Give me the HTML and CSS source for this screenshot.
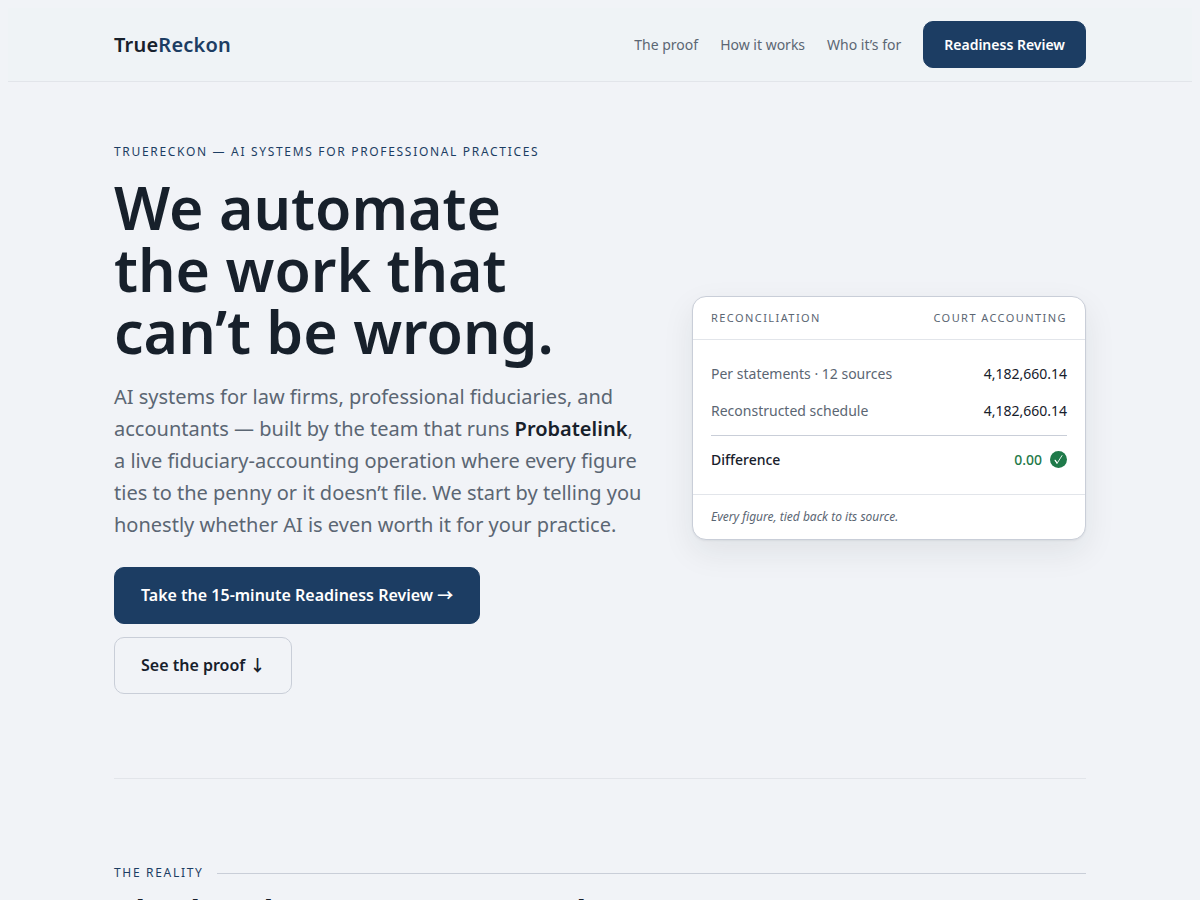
FILE: index.html
```html
<!DOCTYPE html>
<html lang="en">
<head>
<meta charset="utf-8">
<meta name="viewport" content="width=device-width, initial-scale=1">
<title>TrueReckon</title>
<link rel="stylesheet" href="styles.css">
</head>
<body>
<header class="site-header">
  <div class="wrap bar">
    <a class="brand" href="#top">True<span>Reckon</span></a>
    <nav class="nav">
      <a class="nav-link" href="#proof">The proof</a>
      <a class="nav-link" href="#how">How it works</a>
      <a class="nav-link" href="#who">Who it’s for</a>
      <a class="btn btn-primary btn-small" href="#review">Readiness Review</a>
    </nav>
  </div>
</header>
<main class="wrap" id="top">
  <section class="hero">
    <div>
      <p class="eyebrow">TrueReckon — AI systems for professional practices</p>
      <h1 class="title">We automate<br>the work that<br>can’t be wrong.</h1>
      <p class="lede">AI systems for law firms, professional fiduciaries, and accountants — built by the team that runs <strong>Probatelink</strong>, a live fiduciary-accounting operation where every figure ties to the penny or it doesn’t file. We start by telling you honestly whether AI is even worth it for your practice.</p>
      <div class="actions">
        <a class="btn btn-primary" href="#review">Take the 15-minute Readiness Review <span class="arrow">→</span></a>
        <a class="btn btn-ghost" href="#proof">See the proof <span class="arrow">↓</span></a>
      </div>
    </div>
    <aside class="card" id="proof">
      <div class="card-head"><span>Reconciliation</span><span>Court accounting</span></div>
      <dl class="ledger">
        <div class="row"><dt>Per statements · 12 sources</dt><dd>4,182,660.14</dd></div>
        <div class="row"><dt>Reconstructed schedule</dt><dd>4,182,660.14</dd></div>
        <div class="row row-total"><dt>Difference</dt><dd>0.00
          <svg class="check" viewBox="0 0 17 17" role="img" aria-label="Reconciled"><circle cx="8.5" cy="8.5" r="8.5" fill="#1f7a4a"/><path d="M5.2 9.3l1.9 3L12 4.6" fill="none" stroke="#fff" stroke-width="0.9" stroke-linecap="round"/><path d="M5.2 9.3l1.7 2.7" fill="none" stroke="#fff" stroke-width="1.2" stroke-linecap="round"/></svg></dd></div>
      </dl>
      <p class="card-foot">Every figure, tied back to its source.</p>
    </aside>
  </section>
  <section class="reality">
    <p class="eyebrow eyebrow-rule">The reality</p>
    <h2 class="section-title">The hard part was never the AI.</h2>
  </section>
</main>
</body>
</html>
```
FILE: styles.css
```css
* { box-sizing: border-box; }
html { overflow-x: hidden; scrollbar-width: none; }
body {
  background: #f1f3f7;
  color: #17202b;
  font-family: "Noto Sans", sans-serif;
  font-size: 17px;
  line-height: 28px;
}
a { color: inherit; text-decoration: none; }
h1, h2, p, dl, dd { margin: 0; }
.wrap { max-width: 1020px; margin: 0 auto; padding: 0 24px; }
.site-header { background: #eff3f6; border-bottom: 1px solid #e2e5ea; }
.bar { display: flex; align-items: center; justify-content: space-between; padding-top: 13px; padding-bottom: 13px; }
.brand { font-size: 20px; font-weight: 600; letter-spacing: 0.01em; }
.brand span { color: #1c3d63; }
.nav { display: flex; align-items: center; gap: 22px; }
.nav-link { color: #5b6673; font-size: 14px; }
.btn {
  display: inline-block;
  padding: 14px 26px;
  border: 1px solid #c9ced8;
  border-radius: 10px;
  font-size: 16px;
  line-height: 27px;
  font-weight: 600;
}
.btn-primary { background: #1c3d63; border-color: #1c3d63; color: #fff; }
.btn-small { padding: 11px 20px; font-size: 14px; line-height: 23px; }
.arrow { font-family: "Noto Sans CJK JP", sans-serif; line-height: 1; }
.hero {
  display: grid;
  grid-template-columns: 528px 1fr;
  align-items: center;
  gap: 50px;
  padding: 60px 0 84px;
  border-bottom: 1px solid #e2e5ea;
}
.eyebrow { color: #1c3d63; font-size: 12px; line-height: 20px; letter-spacing: 0.14em; text-transform: uppercase; }
.title { margin-top: 14px; font-size: 59px; line-height: 62px; font-weight: 600; }
.lede { margin-top: 19px; color: #5b6673; font-size: 20px; line-height: 32px; }
.lede strong { color: #17202b; font-weight: 600; }
.actions { display: flex; flex-wrap: wrap; gap: 13px; margin-top: 26px; }
.card {
  background: #fff;
  border: 1px solid #c9ced8;
  border-radius: 14px;
  box-shadow: 0 1px 2px rgba(23, 32, 43, 0.06), 0 12px 32px rgba(23, 32, 43, 0.08);
}
.card-head {
  display: flex;
  justify-content: space-between;
  padding: 12px 18px;
  border-bottom: 1px solid #e2e5ea;
  color: #5b6673;
  font-size: 11px;
  line-height: 18px;
  letter-spacing: 0.13em;
  text-transform: uppercase;
}
.ledger { padding: 15px 18px 16px; font-size: 14px; line-height: 23px; }
.row { display: flex; justify-content: space-between; padding: 7px 0; }
.row dt { color: #5b6673; }
.row-total { margin-top: 6px; padding-top: 12px; border-top: 1px solid #c9ced8; font-weight: 500; }
.row-total dt { color: #17202b; }
.row-total dd { display: flex; align-items: center; gap: 8px; color: #1f7a4a; }
.check { width: 17px; height: 17px; }
.card-foot { padding: 12px 18px; border-top: 1px solid #e2e5ea; color: #5b6673; font-size: 12px; line-height: 20px; font-style: italic; }
.reality { padding: 84px 0; }
.eyebrow-rule { display: flex; align-items: center; gap: 14px; }
.eyebrow-rule::after { content: ""; flex: 1; height: 1px; background: #c9ced8; }
.section-title { margin-top: 9px; font-size: 37px; line-height: 44px; font-weight: 600; }
```
